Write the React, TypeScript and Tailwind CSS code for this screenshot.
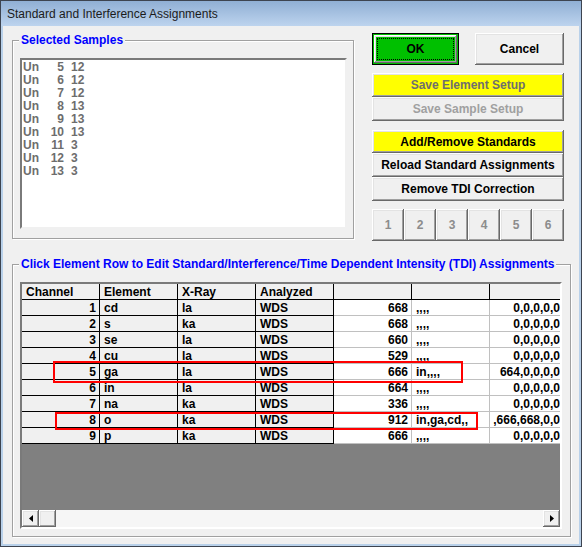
import React from 'react';

const raised =
  'shadow-[inset_-1px_-1px_0_#696969,inset_1px_1px_0_#ffffff,inset_-2px_-2px_0_#a0a0a0,inset_2px_2px_0_#e3e3e3]';

const samples = [
  ['5', '12'],
  ['6', '12'],
  ['7', '12'],
  ['8', '13'],
  ['9', '13'],
  ['10', '13'],
  ['11', '3'],
  ['12', '3'],
  ['13', '3'],
];

const rows = [
  { ch: 1, el: 'cd', xr: 'la', std: '668', intf: ',,,,', tdi: '0,0,0,0,0,0' },
  { ch: 2, el: 's', xr: 'ka', std: '668', intf: ',,,,', tdi: '0,0,0,0,0,0' },
  { ch: 3, el: 'se', xr: 'la', std: '660', intf: ',,,,', tdi: '0,0,0,0,0,0' },
  { ch: 4, el: 'cu', xr: 'la', std: '529', intf: ',,,,', tdi: '0,0,0,0,0,0' },
  { ch: 5, el: 'ga', xr: 'la', std: '666', intf: 'in,,,,', tdi: '664,0,0,0,0,0' },
  { ch: 6, el: 'in', xr: 'la', std: '664', intf: ',,,,', tdi: '0,0,0,0,0,0' },
  { ch: 7, el: 'na', xr: 'ka', std: '336', intf: ',,,,', tdi: '0,0,0,0,0,0' },
  { ch: 8, el: 'o', xr: 'ka', std: '912', intf: 'in,ga,cd,,', tdi: ',666,668,0,0,0' },
  { ch: 9, el: 'p', xr: 'ka', std: '666', intf: ',,,,', tdi: '0,0,0,0,0,0' },
];

function Cell({
  children,
  className = '',
  fixed = false,
}: {
  children?: React.ReactNode;
  className?: string;
  fixed?: boolean;
}) {
  return (
    <div
      className={`flex items-center shrink-0 h-[16px] whitespace-nowrap overflow-hidden border-r border-b ${
        fixed ? 'bg-[#f0f0f0] border-black' : 'bg-white border-[#c0c0c0]'
      } ${className}`}
    >
      {children}
    </div>
  );
}

function GroupBox({
  title,
  className,
  children,
}: {
  title: string;
  className: string;
  children: React.ReactNode;
}) {
  return (
    <div
      className={`relative border border-[#a0a0a0] shadow-[inset_1px_1px_0_#ffffff,1px_1px_0_#ffffff] ${className}`}
    >
      <span className="absolute left-[6px] -top-[8px] px-[2px] bg-[#f0f0f0] leading-[14px] text-[12px] font-bold text-[#0000ff]">
        {title}
      </span>
      {children}
    </div>
  );
}

function Arrow({ dir }: { dir: 'left' | 'right' }) {
  return (
    <svg width="4" height="7" viewBox="0 0 4 7">
      {dir === 'left' ? <path d="M4 0 L0 3.5 L4 7 Z" fill="#000" /> : <path d="M0 0 L4 3.5 L0 7 Z" fill="#000" />}
    </svg>
  );
}

export default function App() {
  return (
    <div className="w-[582px] h-[547px] flex flex-col border border-[#3d4450] bg-[#b9d1ea] font-['Liberation_Sans',Arial,sans-serif] text-black select-none">
      {/* title bar */}
      <div className="h-[25px] shrink-0 flex items-center pl-[6px] bg-gradient-to-b from-[#90afd4] to-[#bdd4ee] text-[12px] text-[#1b1b1b]">
        Standard and Interference Assignments
      </div>

      <div className="flex-1 mx-[2px] mb-[2px] bg-[#f0f0f0] pt-[7px] pl-[9px]">
        <div className="flex items-start">
          <GroupBox title="Selected Samples" className="mt-[7px] w-[342px] h-[199px] pl-[7px] pt-[17px]">
            <div className="w-[327px] h-[171px] bg-white border-2 border-t-[#7a7a7a] border-l-[#7a7a7a] border-r-[#f0f0f0] border-b-[#f0f0f0] pt-[1px] pl-[1px]">
              {samples.map(([a, b]) => (
                <div key={a} className="flex h-[13px] leading-[13px] text-[12px] font-bold text-[#6d6d6d]">
                  <span className="w-[27px]">Un</span>
                  <span className="w-[14px] text-right">{a}</span>
                  <span className="pl-[7px]">{b}</span>
                </div>
              ))}
            </div>
          </GroupBox>

          <div className="ml-[18px] w-[192px] flex flex-col text-[12px] font-bold">
            <div className="flex justify-between">
              <button className="w-[87px] h-[32px] border border-black bg-[#00c000] p-[1px]">
                <div className={`w-full h-full p-[3px] ${raised}`}>
                  <div className="w-full h-full flex items-center justify-center border border-dotted border-black">OK</div>
                </div>
              </button>
              <button className={`w-[89px] h-[32px] bg-[#f0f0f0] ${raised}`}>Cancel</button>
            </div>

            <button className={`mt-[8px] h-[24px] bg-[#ffff00] text-[#6e6e6e] ${raised}`}>Save Element Setup</button>
            <button className={`h-[24px] bg-[#f0f0f0] text-[#a0a0a0] ${raised}`}>Save Sample Setup</button>

            <button className={`mt-[9px] h-[23px] bg-[#ffff00] ${raised}`}>Add/Remove Standards</button>
            <button className={`h-[24px] bg-[#f0f0f0] ${raised}`}>Reload Standard Assignments</button>
            <button className={`h-[24px] bg-[#f0f0f0] ${raised}`}>Remove TDI Correction</button>

            <div className="mt-[8px] flex">
              {['1', '2', '3', '4', '5', '6'].map((n) => (
                <button key={n} className={`w-[32px] h-[32px] bg-[#f0f0f0] text-[#8c8c8c] ${raised}`}>
                  {n}
                </button>
              ))}
            </div>
          </div>
        </div>

        <GroupBox
          title="Click Element Row to Edit Standard/Interference/Time Dependent Intensity (TDI) Assignments"
          className="mt-[23px] w-[559px] h-[273px] pl-[7px] pt-[17px]"
        >
          <div className="relative w-[542px] h-[247px] border-2 border-t-[#7a7a7a] border-l-[#7a7a7a] border-r-[#ffffff] border-b-[#ffffff]">
            <div className="w-full h-full flex flex-col overflow-hidden text-[12px] font-bold">
              <div className="flex">
                <Cell fixed className="w-[78px] pl-[4px]">Channel</Cell>
                <Cell fixed className="w-[78px] pl-[4px]">Element</Cell>
                <Cell fixed className="w-[78px] pl-[4px]">X-Ray</Cell>
                <Cell fixed className="w-[78px] pl-[4px]">Analyzed</Cell>
                <Cell fixed className="w-[78px]" />
                <Cell fixed className="w-[78px]" />
                <Cell fixed className="w-[83px]" />
              </div>
              {rows.map((r) => (
                <div key={r.ch} className="flex">
                  <Cell fixed className="w-[78px] justify-end pr-[3px]">{r.ch}</Cell>
                  <Cell fixed className="w-[78px] pl-[4px]">{r.el}</Cell>
                  <Cell fixed className="w-[78px] pl-[4px]">{r.xr}</Cell>
                  <Cell fixed className="w-[78px] pl-[4px]">WDS</Cell>
                  <Cell className="w-[78px] justify-end pr-[3px]">{r.std}</Cell>
                  <Cell className="w-[78px] pl-[4px]">{r.intf}</Cell>
                  <Cell className="w-[83px] justify-end pr-[2px]">{r.tdi}</Cell>
                </div>
              ))}
              <div className="flex-1 bg-[#808080]" />
              <div className="h-[17px] shrink-0 flex bg-[#f6f6f6]">
                <div className={`w-[17px] h-[17px] flex items-center justify-center bg-[#f0f0f0] ${raised}`}>
                  <Arrow dir="left" />
                </div>
                <div className={`w-[17px] h-[17px] bg-[#f0f0f0] ${raised}`} />
                <div className="flex-1" />
                <div className={`w-[17px] h-[17px] flex items-center justify-center bg-[#f0f0f0] ${raised}`}>
                  <Arrow dir="right" />
                </div>
              </div>
            </div>

            <div className="absolute left-[31px] top-[77px] w-[410px] h-[22px] border-2 border-[#ff0000]" />
            <div className="absolute left-[33px] top-[128px] w-[423px] h-[18px] border-2 border-[#ff0000]" />
          </div>
        </GroupBox>
      </div>
    </div>
  );
}
